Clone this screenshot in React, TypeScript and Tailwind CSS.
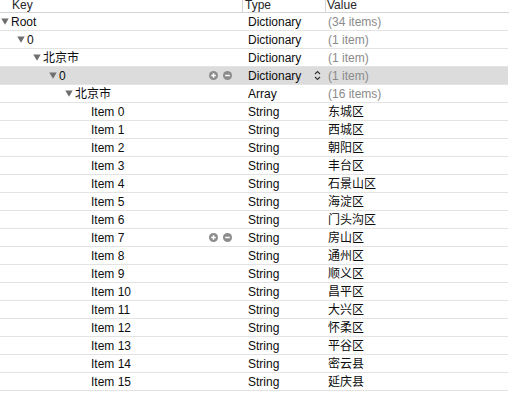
import React from "react";

type Row = {
  key: string;
  level: number;
  expandable?: boolean;
  type: string;
  value: string;
  gray?: boolean;
  selected?: boolean;
  controls?: boolean;
};

const districts = [
  "东城区","西城区","朝阳区","丰台区","石景山区","海淀区","门头沟区","房山区",
  "通州区","顺义区","昌平区","大兴区","怀柔区","平谷区","密云县","延庆县",
];

const rows: Row[] = [
  { key: "Root", level: 0, expandable: true, type: "Dictionary", value: "(34 items)", gray: true },
  { key: "0", level: 1, expandable: true, type: "Dictionary", value: "(1 item)", gray: true },
  { key: "北京市", level: 2, expandable: true, type: "Dictionary", value: "(1 item)", gray: true },
  { key: "0", level: 3, expandable: true, type: "Dictionary", value: "(1 item)", gray: true, selected: true, controls: true },
  { key: "北京市", level: 4, expandable: true, type: "Array", value: "(16 items)", gray: true },
  ...districts.map((d, i) => ({
    key: `Item ${i}`,
    level: 5,
    type: "String",
    value: d,
    controls: i === 7,
  })),
];

function Triangle() {
  return (
    <svg width="8" height="7" viewBox="0 0 8 7" className="shrink-0">
      <path d="M0.3 0.5 L7.7 0.5 L4 6.8 Z" fill="#6f6f6f" />
    </svg>
  );
}

function PlusMinus() {
  return (
    <div className="flex items-center gap-[5px]">
      <svg width="9" height="9" viewBox="0 0 9 9">
        <circle cx="4.5" cy="4.5" r="4.5" fill="#8c8c8c" />
        <path d="M2.2 4.5 H6.8 M4.5 2.2 V6.8" stroke="#fff" strokeWidth="1.5" />
      </svg>
      <svg width="9" height="9" viewBox="0 0 9 9">
        <circle cx="4.5" cy="4.5" r="4.5" fill="#8c8c8c" />
        <path d="M2.2 4.5 H6.8" stroke="#fff" strokeWidth="1.5" />
      </svg>
    </div>
  );
}

function UpDown() {
  return (
    <svg width="7" height="11" viewBox="0 0 7 11" className="shrink-0">
      <path d="M1 4 L3.5 1.5 L6 4" fill="none" stroke="#333" strokeWidth="1.1" />
      <path d="M1 7 L3.5 9.5 L6 7" fill="none" stroke="#333" strokeWidth="1.1" />
    </svg>
  );
}

export default function App() {
  return (
    <div
      className="w-[509px] h-[394px] bg-white overflow-hidden text-[12px] text-[#0d0d0d]"
      style={{ fontFamily: '"Liberation Sans", Arial, "Noto Sans CJK SC", sans-serif' }}
    >
      {/* header */}
      <div className="flex h-[13px] border-b border-[#d4d4d4] overflow-hidden text-[#262626] leading-[12px]">
        <div className="w-[242px] pl-[12px]">
          <div className="mt-[-1px]">Key</div>
        </div>
        <div className="w-[83px] border-l border-[#d4d4d4] pl-[2px]">
          <div className="mt-[-1px]">Type</div>
        </div>
        <div className="flex-1 border-l border-[#d4d4d4] pl-[1px]">
          <div className="mt-[-1px]">Value</div>
        </div>
      </div>
      {rows.map((r, idx) => (
        <div
          key={idx}
          className={`flex items-center h-[18px] border-b border-[#e3e3e3] mr-[1px] ${
            r.selected ? "bg-[#dcdcdc]" : ""
          }`}
        >
          <div className="w-[242px] flex items-center h-full pr-[10px]">
            <div
              className="flex items-center"
              style={{ paddingLeft: r.expandable ? 1 + r.level * 16 : 11 + r.level * 16 }}
            >
              {r.expandable && (
                <span className="mr-[2px] flex items-center">
                  <Triangle />
                </span>
              )}
              <span>{r.key}</span>
            </div>
            <div className="flex-1" />
            {r.controls && <PlusMinus />}
          </div>
          <div className="w-[83px] flex items-center pl-[6px] pr-[4px] h-full">
            <span>{r.type}</span>
            <div className="flex-1" />
            {r.selected && <UpDown />}
          </div>
          <div className={`flex-1 pl-[3px] ${r.gray ? "text-[#8a8a8a]" : ""}`}>{r.value}</div>
        </div>
      ))}
    </div>
  );
}
